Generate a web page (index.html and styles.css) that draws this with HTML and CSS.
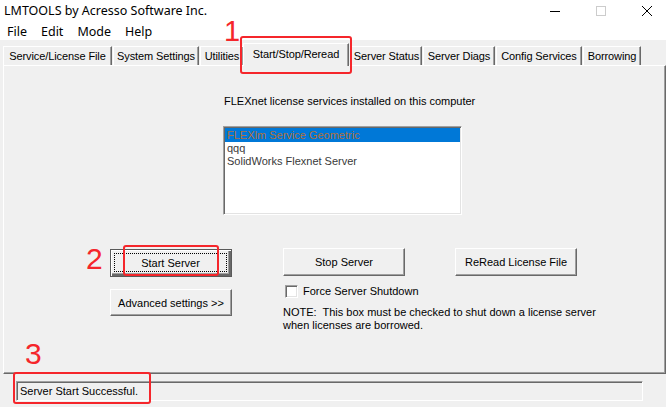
FILE: index.html
```html
<!DOCTYPE html>
<html>
<head>
<meta charset="utf-8">
<link rel="stylesheet" href="styles.css">
</head>
<body>
<div class="titlebar">
  <div class="title">LMTOOLS by Acresso Software Inc.</div>
  <div class="winbtns">
    <span class="winbtn"><svg width="10" height="10" viewBox="0 0 10 10"><path d="M0 5.5H10" stroke="#000" stroke-width="1"/></svg></span>
    <span class="winbtn"><svg width="10" height="10" viewBox="0 0 10 10"><rect x="0.5" y="0.5" width="9" height="9" fill="none" stroke="#cccccc" stroke-width="1"/></svg></span>
    <span class="winbtn"><svg width="10" height="10" viewBox="0 0 10 10"><path d="M0 0L10 10M10 0L0 10" stroke="#000" stroke-width="1"/></svg></span>
  </div>
</div>
<div class="menubar">
  <span class="menu">File</span><span class="menu">Edit</span><span class="menu">Mode</span><span class="menu">Help</span>
</div>
<div class="tabstrip">
  <div class="tab t-service">Service/License File</div>
  <div class="tab t-system">System Settings</div>
  <div class="tab t-utilities">Utilities</div>
  <div class="tab active">Start/Stop/Reread</div>
  <div class="tab t-status">Server Status</div>
  <div class="tab t-diags">Server Diags</div>
  <div class="tab t-config">Config Services</div>
  <div class="tab t-borrow">Borrowing</div>
</div>
<div class="panel">
  <div class="caption">FLEXnet license services installed on this computer</div>
  <div class="listbox">
    <div class="item selected">FLEXlm Service Geometric</div>
    <div class="item">qqq</div>
    <div class="item">SolidWorks Flexnet Server</div>
  </div>
  <div class="controls">
    <div class="col col-left">
      <div class="btn default"><span class="focus">Start Server</span></div>
      <div class="btn adv">Advanced settings &gt;&gt;</div>
    </div>
    <div class="col col-mid">
      <div class="btn">Stop Server</div>
      <label class="check"><span class="box"></span><span>Force Server Shutdown</span></label>
      <div class="note">NOTE:&nbsp; This box must be checked to shut down a license server<br>when licenses are borrowed.</div>
    </div>
    <div class="col col-right">
      <div class="btn">ReRead License File</div>
    </div>
  </div>
</div>
<div class="statusbar">Server Start Successful.</div>

<div class="mark mark1">1</div>
<div class="mark mark2">2</div>
<div class="mark mark3">3</div>
<div class="redbox box1"></div>
<div class="redbox box2"></div>
<div class="redbox box3"></div>
</body>
</html>
```

FILE: styles.css
```css
* { box-sizing: border-box; }

body {
  margin: 0;
  width: 666px;
  height: 407px;
  overflow: hidden;
  position: relative;
  background: #f0f0f0;
  font-family: "Liberation Sans", Arial, sans-serif;
  font-size: 11px;
  color: #000;
}

.titlebar {
  height: 21px;
  background: #fff;
  display: flex;
  align-items: center;
  padding-left: 4px;
  font-family: "Noto Sans", "Liberation Sans", sans-serif;
  font-size: 12.5px;
}
.title { flex: 1; line-height: 21px; }
.winbtns { display: flex; margin-right: -4px; }
.winbtn {
  width: 46px;
  height: 21px;
  display: flex;
  align-items: center;
  justify-content: center;
}
.winbtn svg { display: block; }

.menubar {
  height: 19px;
  background: #fff;
  display: flex;
  font-family: "Noto Sans", "Liberation Sans", sans-serif;
  font-size: 12.5px;
  line-height: 17px;
  padding-top: 2px;
}
.menu { padding: 0 7px; }

.tabstrip {
  height: 25px;
  display: flex;
  align-items: flex-end;
  padding-left: 3px;
  position: relative;
  z-index: 2;
}
.tab {
  height: 19px;
  line-height: 17px;
  padding-top: 1px;
  border-top: 1px solid #fff;
  border-left: 1px solid #fff;
  border-right: 1px solid #696969;
  box-shadow: inset -1px 0 #a0a0a0;
  margin-right: 1px;
  white-space: nowrap;
  background: #f0f0f0;
  display: flex;
  justify-content: center;
  letter-spacing: -0.1px;
}
.t-service { width: 109px; }
.t-system { width: 86px; }
.t-utilities { width: 44px; }
.t-status { width: 71px; }
.t-diags { width: 72px; }
.t-config { width: 86px; }
.t-borrow { width: 58px; }
.tab.active {
  width: 106px;
  height: 23px;
  margin: 0 2px -1px -2px;
  padding-top: 0;
  line-height: 21px;
  position: relative;
  z-index: 3;
}

.panel {
  margin-left: 3px;
  width: 663px;
  height: 309px;
  border-top: 1px solid #fff;
  border-left: 1px solid #fff;
  border-right: 1px solid #696969;
  border-bottom: 1px solid #696969;
  box-shadow: inset -1px -1px #a0a0a0;
  position: relative;
  z-index: 1;
}

.caption {
  margin: 29px 0 0 220px;
  line-height: 13px;
}

.listbox {
  margin: 18px 0 0 219px;
  width: 239px;
  height: 89px;
  background: #fff;
  border-top: 1px solid #a0a0a0;
  border-left: 1px solid #a0a0a0;
  border-right: 1px solid #fff;
  border-bottom: 1px solid #fff;
  box-shadow: inset 1px 1px #696969, inset -1px -1px #e3e3e3;
  padding: 1px 1px 0 1px;
}
.item {
  height: 13px;
  line-height: 13px;
  padding-left: 2px;
  color: #3a3a3a;
  white-space: nowrap;
}
.item.selected {
  height: 14px;
  line-height: 14px;
  background: #0078d7;
  color: #b0703a;
}

.controls {
  display: flex;
  margin-top: 33px;
}
.col { display: flex; flex-direction: column; }
.col-left { margin-left: 106px; width: 122px; gap: 12px; padding-top: 1px; }
.col-mid { margin-left: 51px; width: 330px; }
.col-right { margin-left: -158px; width: 122px; }

.btn {
  width: 122px;
  height: 28px;
  background: #f0f0f0;
  border-top: 1px solid #fff;
  border-left: 1px solid #fff;
  border-right: 1px solid #696969;
  border-bottom: 1px solid #696969;
  box-shadow: inset -1px -1px #a0a0a0;
  display: flex;
  align-items: center;
  justify-content: center;
  white-space: nowrap;
}
.btn.adv { height: 27px; }
.btn.default {
  border: 1px solid #5a5a5a;
  box-shadow: inset 1px 1px #fff, inset -2px -2px #696969, inset -3px -3px #a0a0a0;
  padding: 3px 4px 4px 3px;
}
.focus {
  flex: 1;
  align-self: stretch;
  border: 1px dotted #000;
  display: flex;
  align-items: center;
  justify-content: center;
}

.check {
  display: flex;
  align-items: center;
  gap: 5px;
  margin: 9px 0 0 2px;
  line-height: 13px;
}
.box {
  width: 13px;
  height: 13px;
  background: #fff;
  border-top: 1px solid #a0a0a0;
  border-left: 1px solid #a0a0a0;
  border-right: 1px solid #fff;
  border-bottom: 1px solid #fff;
  box-shadow: inset 1px 1px #696969, inset -1px -1px #e3e3e3;
}
.note {
  margin-top: 8px;
  line-height: 13px;
}

.statusbar {
  margin: 7px 0 0 16px;
  width: 627px;
  height: 20px;
  border-top: 1px solid #a0a0a0;
  border-left: 1px solid #a0a0a0;
  border-right: 1px solid #fff;
  border-bottom: 1px solid #fff;
  box-shadow: inset 1px 1px #696969;
  padding-left: 3px;
  line-height: 18px;
}

.mark {
  position: absolute;
  color: #f5262b;
  font-family: "Liberation Sans", Arial, sans-serif;
  z-index: 10;
}
.mark1 { left: 224px; top: 17px; font-size: 29px; line-height: 29px; }
.mark2 { left: 86px; top: 244px; font-size: 30px; line-height: 30px; }
.mark3 { left: 25px; top: 339px; font-size: 30px; line-height: 30px; }

.redbox {
  position: absolute;
  border: 2px solid #f5262b;
  border-radius: 3px;
  z-index: 10;
}
.box1 { left: 240px; top: 36px; width: 112px; height: 38px; }
.box2 { left: 123px; top: 245px; width: 96px; height: 31px; }
.box3 { left: 13px; top: 372px; width: 138px; height: 32px; }
```
